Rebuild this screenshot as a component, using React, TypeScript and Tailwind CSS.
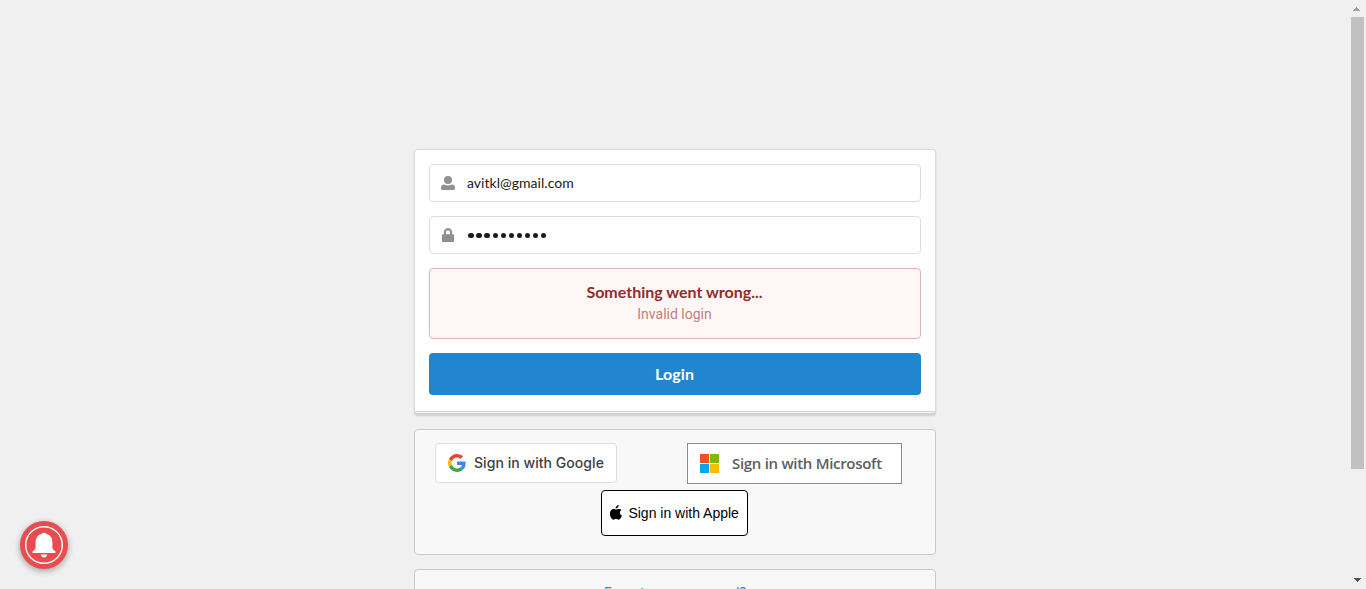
import { FaLock } from "react-icons/fa";

function UserIcon() {
  return (
    <svg width="14" height="14" viewBox="0 0 14 14" fill="#909090">
      <circle cx="7" cy="4" r="4" />
      <path d="M3.200 8.500C4.300 9.200 5.600 9.400 7 9.400s2.700-.2 3.800-.9C12.800 8.500 14 9.800 14 11.500v1c0 .9-.6 1.500-1.500 1.500h-11C.6 14 0 13.400 0 12.500v-1c0-1.700 1.200-3 3.200-3z" />
    </svg>
  );
}

function GoogleLogo() {
  return (
    <svg width="18" height="18" viewBox="0 0 48 48">
      <path fill="#EA4335" d="M24 9.5c3.54 0 6.71 1.22 9.21 3.6l6.85-6.85C35.9 2.38 30.47 0 24 0 14.62 0 6.51 5.38 2.56 13.22l7.98 6.19C12.43 13.72 17.74 9.5 24 9.5z" />
      <path fill="#4285F4" d="M46.98 24.55c0-1.57-.15-3.09-.38-4.55H24v9.02h12.94c-.58 2.96-2.26 5.48-4.78 7.18l7.73 6c4.51-4.18 7.09-10.36 7.09-17.65z" />
      <path fill="#FBBC05" d="M10.53 28.59c-.48-1.45-.76-2.99-.76-4.59s.27-3.14.76-4.59l-7.98-6.19C.92 16.46 0 20.12 0 24c0 3.88.92 7.54 2.56 10.78l7.97-6.19z" />
      <path fill="#34A853" d="M24 48c6.48 0 11.93-2.13 15.89-5.81l-7.73-6c-2.15 1.45-4.92 2.3-8.16 2.3-6.26 0-11.57-4.22-13.47-9.91l-7.98 6.19C6.51 42.62 14.62 48 24 48z" />
    </svg>
  );
}

function MicrosoftLogo() {
  return (
    <svg width="19" height="19" viewBox="0 0 19 19" shapeRendering="crispEdges">
      <path fill="#f25022" d="M0 0h9v9H0z" />
      <path fill="#7fba00" d="M10 0h9v9h-9z" />
      <path fill="#00a4ef" d="M0 10h9v9H0z" />
      <path fill="#ffb900" d="M10 10h9v9h-9z" />
    </svg>
  );
}

function AppleLogo() {
  return (
    <svg width="12" height="15" viewBox="0 0 24 30" fill="#000">
      <path d="M17.300 0c.2 2-.6 3.800-1.700 5.100-1.100 1.300-2.800 2.200-4.400 2.100-.2-1.800.6-3.700 1.700-4.900C14 1 15.800.1 17.300 0zM23.200 10.200c-2.100 1.200-3.300 3-3.300 5.200 0 2.600 1.500 4.700 4.100 5.700-.5 1.500-1.200 3-2.200 4.400-1.300 1.900-2.700 3.800-4.800 3.800-2 0-2.700-1.200-5-1.200s-3.100 1.200-5 1.300c-2 .1-3.600-2-4.900-3.900C-.6 21.700-1 14.800 1.500 11.300c1.500-2.200 3.700-3.500 6-3.500 2 0 3.500 1.300 5 1.300 1.400 0 3.100-1.500 5.500-1.300 2 .1 3.900.8 5.200 2.400z" />
    </svg>
  );
}

function Bell() {
  return (
    <button aria-label="Notifications" className="absolute left-5 top-[521px] size-12 rounded-full bg-[#e84c4f] shadow-[0_2px_6px_rgba(0,0,0,0.35)]">
      <svg width="48" height="48" viewBox="0 0 48 48">
        <circle cx="24" cy="24" r="18.3" fill="none" stroke="#fff" strokeWidth="1.4" />
        <path fill="#fff" d="M24 11.800c1.200 0 2.100.4 2.700 1.200 3.700 1 5.700 4 5.700 8.200v5.300c0 1.500 1.100 2.700 3 3.800v1.800H12.600v-1.800c1.900-1.100 3-2.300 3-3.800v-5.300c0-4.200 2-7.200 5.700-8.200.6-.8 1.500-1.200 2.700-1.200zM20.800 33.500h6.400c-.3 1.800-1.500 3-3.200 3s-2.900-1.200-3.200-3z" />
      </svg>
    </button>
  );
}

function Scrollbar() {
  return (
    <div className="flex w-4 shrink-0 flex-col items-start bg-[#f0f0f0]">
      <div className="flex h-[17px] w-[13px] items-center justify-center pt-px">
        <svg width="7" height="4" viewBox="0 0 7 4" shapeRendering="crispEdges" fill="#a3a3a3">
          <path d="M3 0h1v1h1v1h1v1h1v1H0V3h1V2h1V1h1z" />
        </svg>
      </div>
      <div className="ml-px h-[452px] w-[13px] bg-[#c1c1c1]" />
      <div className="mt-auto flex h-[17px] w-[15px] items-center justify-center pb-[2px]">
        <svg width="7" height="4" viewBox="0 0 7 4" shapeRendering="crispEdges" fill="#505050">
          <path d="M0 0h7v1H6v1H5v1H4v1H3V3H2V2H1V1H0z" />
        </svg>
      </div>
    </div>
  );
}

export default function App() {
  return (
    <div className="relative flex h-[589px] w-full overflow-hidden bg-[#f0f0f0] font-['Lato',sans-serif] text-sm text-[#212121]">
      <main className="flex min-w-0 flex-1 flex-col items-center pt-[149px]">
        <section className="h-[266px] w-[522px] shrink-0 rounded border border-b-2 border-[#dadbdb] border-b-[#d0d1d1] bg-[#f7f7f7] shadow-[0_1px_2px_rgba(34,36,38,0.15)]">
          <form className="flex h-[262px] flex-col gap-3.5 rounded-t border-b border-[#d4d4d5] bg-white px-3.5 pt-3.5" onSubmit={(e) => e.preventDefault()}>
            <label className="flex h-[38px] shrink-0 items-center rounded border border-[#dededf] bg-white pl-[11px]">
              <UserIcon />
              <input className="ml-3 w-96 text-sm tracking-[0.03px] outline-none" defaultValue="avitkl@gmail.com" />
            </label>
            <label className="flex h-[38px] shrink-0 items-center rounded border border-[#dededf] bg-white pt-px pl-[11px]">
              <FaLock className="-mt-px size-[14px] text-[#909090]" />
              <span className="ml-[13.3px] flex gap-[2.8px]">
                {Array.from({ length: 10 }, (_, i) => (
                  <span key={i} className="size-[5.3px] rounded-full bg-[#1b1c1d]" />
                ))}
              </span>
            </label>
            <div className="h-[71px] shrink-0 rounded border border-[#e0b4b4] bg-[#fff6f6] pt-[13px] pr-px text-center">
              <div className="text-base leading-5 font-bold text-[#912d2b]">Something went wrong...</div>
              <p className="mt-0.5 font-['Roboto',sans-serif] text-sm leading-5 text-[#c27f7f]">Invalid login</p>
            </div>
            <button className="h-[42px] shrink-0 rounded bg-[#2185d0] pr-px text-base font-bold tracking-[0.1px] text-white">Login</button>
          </form>
        </section>

        <section className="mt-3.5 flex h-[126px] w-[522px] shrink-0 flex-col rounded border border-[#c9c9c9] bg-[#f8f8f8] pt-[13px] pr-[33px] pl-5">
          <div className="flex items-start justify-between">
            <button className="flex h-10 w-[182px] items-center rounded border border-[#dadce0] bg-white pl-3">
              <GoogleLogo />
              <span className="ml-2 font-['Inter',sans-serif] text-sm font-medium tracking-[0.05px] whitespace-nowrap text-[#3c4043]">Sign in with Google</span>
            </button>
            <button className="flex h-[41px] w-[215px] items-center border border-[#8c8c8c] bg-white pl-3">
              <MicrosoftLogo />
              <span className="ml-[13px] font-['Open_Sans',sans-serif] text-[15px] font-semibold tracking-[-0.3px] whitespace-nowrap text-[#5e5e5e]">Sign in with Microsoft</span>
            </button>
          </div>
          <button className="mt-1.5 ml-[166px] flex h-[46px] w-[147px] items-center rounded border border-black bg-white pl-2 text-black">
            <span className="-mt-0.5">
              <AppleLogo />
            </span>
            <span className="ml-[6.4px] font-['Liberation_Sans',sans-serif] text-sm whitespace-nowrap">Sign in with Apple</span>
          </button>
        </section>

        <section className="mt-3.5 h-[50px] w-[522px] shrink-0 rounded border border-[#c9c9c9] bg-[#f8f8f8] pt-[13px] text-center">
          <a href="#" className="font-['Roboto',sans-serif] text-sm leading-5 text-[#4183c4]">Forgot your password?</a>
        </section>
      </main>
      <Scrollbar />
      <Bell />
    </div>
  );
}
